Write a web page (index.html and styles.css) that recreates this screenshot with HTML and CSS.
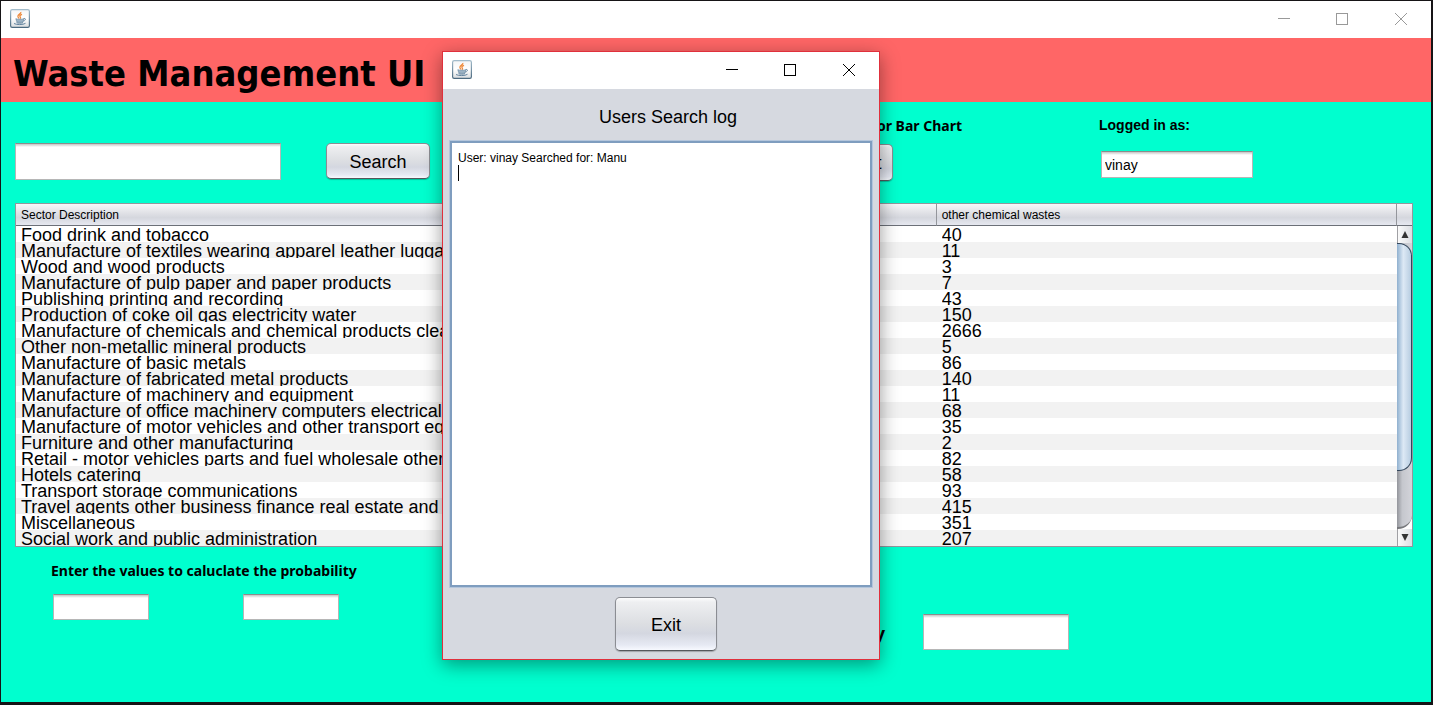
FILE: index.html
```
<!DOCTYPE html>
<html lang="en">
<head>
<meta charset="utf-8">
<title>Waste Management UI</title>
<link rel="stylesheet" href="styles.css">
</head>
<body>
<svg class="defs" aria-hidden="true">
  <defs>
    <linearGradient id="tile" x1="0" y1="0" x2="0" y2="1">
      <stop offset="0" stop-color="#f4f5f6"/><stop offset=".5" stop-color="#fff"/><stop offset="1" stop-color="#d9dcde"/>
    </linearGradient>
    <linearGradient id="rim" x1="0" y1="0" x2="0" y2="1">
      <stop offset="0" stop-color="#a3bccb"/><stop offset="1" stop-color="#4c6a80"/>
    </linearGradient>
    <symbol id="java" viewBox="0 0 20 19">
      <rect x=".6" y=".6" width="18.8" height="17.8" rx="1.6" fill="url(#tile)" stroke="url(#rim)" stroke-width="1.2"/>
      <path d="M10.8 3c.8 1.7-3.300 2.500-2.900 4.500.1.800.7 1.200 1.200 2M12 5.300C9.900 6.200 9.300 7 10.300 8.100c.5.600.1 1.100-.4 1.500" fill="none" stroke="#ee8a3c" stroke-width="1.300"/>
      <path d="M5.800 9.700c2.200.8 6 .8 8.200 0l-.9 3.100c-1.500.7-4.800.7-6.300 0z" fill="#9db3c4" stroke="#6f8da5" stroke-width=".7"/>
      <path d="M13.800 9.500c2.300-.5 2.300 1.900-.4 2.500" fill="none" stroke="#6f8da5" stroke-width="1"/>
      <path d="M4 14.500c2.500 1.500 9 1.500 11.500-.2M6.500 13.700c2 .6 4.500.6 6.500 0" fill="none" stroke="#6485a0" stroke-width="1"/>
    </symbol>
    <symbol id="min" viewBox="0 0 12 12"><path d="M0 5.500h12" stroke="currentColor"/></symbol>
    <symbol id="max" viewBox="0 0 12 12"><path d="M.5.500h11v11H.5z" fill="none" stroke="currentColor"/></symbol>
    <symbol id="close" viewBox="0 0 12 12"><path d="M0 0l12 12M12 0L0 12" stroke="currentColor"/></symbol>
  </defs>
</svg>

<main class="window">
  <div class="titlebar titlebar-inactive">
    <svg class="app-icon"><use href="#java"/></svg>
    <div class="controls">
      <button class="control" aria-label="Minimize"><svg><use href="#min"/></svg></button>
      <button class="control" aria-label="Maximize"><svg><use href="#max"/></svg></button>
      <button class="control" aria-label="Close"><svg><use href="#close"/></svg></button>
    </div>
  </div>
  <header class="banner"><h1>Waste Management UI</h1></header>

  <div class="content">
    <div class="toolbar">
      <form class="search">
        <input class="field field-search" type="text" aria-label="Search text">
        <button class="btn btn-search" type="button">Search</button>
      </form>
      <div class="chart">
        <label class="caption" for="chart">For Bar Chart</label>
        <button class="btn btn-chart" id="chart" type="button">Bar Chart</button>
      </div>
      <div class="login">
        <label class="caption caption-plain" for="user">Logged in as:</label>
        <input class="field field-user" id="user" type="text" value="vinay">
      </div>
    </div>

    <div class="scrollpane">
      <div class="viewport">
        <table class="grid">
          <thead><tr><th>Sector Description</th><th></th><th>other chemical wastes</th></tr></thead>
          <tbody>
            <tr><td><span>Food drink and tobacco</span></td><td></td><td><span>40</span></td></tr>
            <tr><td><span>Manufacture of textiles wearing apparel leather luggage</span></td><td></td><td><span>11</span></td></tr>
            <tr><td><span>Wood and wood products</span></td><td></td><td><span>3</span></td></tr>
            <tr><td><span>Manufacture of pulp paper and paper products</span></td><td></td><td><span>7</span></td></tr>
            <tr><td><span>Publishing printing and recording</span></td><td></td><td><span>43</span></td></tr>
            <tr><td><span>Production of coke oil gas electricity water</span></td><td></td><td><span>150</span></td></tr>
            <tr><td><span>Manufacture of chemicals and chemical products clea</span></td><td></td><td><span>2666</span></td></tr>
            <tr><td><span>Other non-metallic mineral products</span></td><td></td><td><span>5</span></td></tr>
            <tr><td><span>Manufacture of basic metals</span></td><td></td><td><span>86</span></td></tr>
            <tr><td><span>Manufacture of fabricated metal products</span></td><td></td><td><span>140</span></td></tr>
            <tr><td><span>Manufacture of machinery and equipment</span></td><td></td><td><span>11</span></td></tr>
            <tr><td><span>Manufacture of office machinery computers electrical</span></td><td></td><td><span>68</span></td></tr>
            <tr><td><span>Manufacture of motor vehicles and other transport eq</span></td><td></td><td><span>35</span></td></tr>
            <tr><td><span>Furniture and other manufacturing</span></td><td></td><td><span>2</span></td></tr>
            <tr><td><span>Retail - motor vehicles parts and fuel wholesale other</span></td><td></td><td><span>82</span></td></tr>
            <tr><td><span>Hotels catering</span></td><td></td><td><span>58</span></td></tr>
            <tr><td><span>Transport storage communications</span></td><td></td><td><span>93</span></td></tr>
            <tr><td><span>Travel agents other business finance real estate and</span></td><td></td><td><span>415</span></td></tr>
            <tr><td><span>Miscellaneous</span></td><td></td><td><span>351</span></td></tr>
            <tr><td><span>Social work and public administration</span></td><td></td><td><span>207</span></td></tr>
          </tbody>
        </table>
      </div>
      <div class="scrollbar">
        <div class="corner"></div>
        <button class="arrow" aria-label="Scroll up"><svg viewBox="0 0 8 7"><path d="M4 0l3.500 7h-7z"/></svg></button>
        <div class="track"><div class="thumb"></div></div>
        <button class="arrow" aria-label="Scroll down"><svg viewBox="0 0 8 7"><path d="M4 7L.5 0h7z"/></svg></button>
      </div>
    </div>

    <div class="bottom">
      <fieldset class="values">
        <legend class="caption">Enter the values to caluclate the probability</legend>
        <div class="pair">
          <input class="field field-small" type="text" aria-label="First value">
          <input class="field field-small" type="text" aria-label="Second value">
        </div>
      </fieldset>
      <div class="result">
        <label class="result-label" for="prob">Probability</label>
        <input class="field field-result" id="prob" type="text">
      </div>
    </div>
  </div>
</main>

<section class="dialog" role="dialog" aria-labelledby="log-title">
  <div class="titlebar">
    <svg class="app-icon"><use href="#java"/></svg>
    <div class="controls">
      <button class="control" aria-label="Minimize"><svg><use href="#min"/></svg></button>
      <button class="control" aria-label="Maximize"><svg><use href="#max"/></svg></button>
      <button class="control" aria-label="Close"><svg><use href="#close"/></svg></button>
    </div>
  </div>
  <div class="dialog-body">
    <label class="dialog-title" id="log-title" for="log">Users Search log</label>
    <div class="log">
      <textarea id="log">User: vinay Searched for: Manu
</textarea>
      <span class="caret"></span>
    </div>
    <button class="btn btn-exit" type="button">Exit</button>
  </div>
</section>
</body>
</html>
```
FILE: styles.css
```
* { box-sizing: border-box; }

body {
  margin: 0;
  min-height: 100vh;
  padding: 1px 2px 3px 1px;
  display: flex;
  background: #161416;
  color: #000;
  font: 18px "Liberation Sans", Arial, sans-serif;
}

button, input, textarea { font: inherit; color: inherit; margin: 0; }
.defs { position: absolute; width: 0; height: 0; }

.window {
  flex: 1;
  display: flex;
  flex-direction: column;
  background: #00ffcf;
}

/* Title bars */
.titlebar {
  display: flex;
  align-items: center;
  justify-content: space-between;
  height: 37px;
  padding: 0 0 2px 9px;
  background: #fff;
}
.app-icon { width: 20px; height: 19px; }
.controls { display: flex; }
.control {
  width: 58px;
  height: 35px;
  padding: 0;
  border: 0;
  background: none;
  display: grid;
  place-items: center;
}
.control:last-child { width: 60px; }
.control svg { width: 12px; height: 12px; shape-rendering: crispEdges; }
.titlebar-inactive .control { color: #999; }

.banner {
  height: 64px;
  padding: 0 12px;
  display: flex;
  align-items: center;
  background: #ff6666;
}
h1 {
  margin: 0;
  padding-top: 8px;
  font: bold 36px/44px "DejaVu Sans Condensed", Tahoma, sans-serif;
}

.content { padding: 0 18px 0 14px; }

/* Shared controls */
.caption { font: bold 14px/18px "Noto Sans", Tahoma, sans-serif; }
.caption-plain { font-family: "Liberation Sans", Arial, sans-serif; }

.field {
  border: 1px solid #b6b6b6;
  border-top: 1px solid #8c8c8c;
  border-radius: 0;
  background: linear-gradient(#c4c4c4, #ececec 2px, #fff 3px);
  padding: 0 3px;
  outline: 0;
}

.btn {
  padding: 2px 0 0;
  border: 1px solid #8b8d93;
  border-bottom-color: #55575c;
  border-radius: 5px;
  background: linear-gradient(#fcfcfd, #eeeff1 8%, #dcdee2 50%, #d4d7e0 68%, #e6e9f3 90%, #f7f9ff);
  box-shadow: 0 1px 1px rgba(0, 0, 0, .25);
}

/* Row above the table */
.toolbar {
  display: flex;
  height: 101px;
  padding-right: 160px;
}
.search { display: flex; gap: 45px; padding-top: 41px; }
.field-search { width: 266px; height: 37px; }
.btn-search { width: 104px; height: 36px; }
.chart {
  width: 167px;
  margin-left: auto;
  padding-top: 15px;
  display: flex;
  flex-direction: column;
  gap: 9px;
}
.chart .caption { text-align: right; }
.btn-chart { width: 98px; height: 37px; padding-right: 2px; }
.login {
  width: 154px;
  margin-left: 137px;
  padding-top: 14px;
  display: flex;
  flex-direction: column;
  align-items: flex-start;
  gap: 17px;
}
.field-user { width: 152px; height: 27px; margin-left: 2px; font-size: 14px; }

/* Table */
.scrollpane {
  display: flex;
  border: 1px solid #94969c;
  background: #fff;
}
.viewport { flex: 1; min-width: 0; }
.grid {
  width: 100%;
  table-layout: fixed;
  border-collapse: separate;
  border-spacing: 0;
}
.grid th {
  height: 22px;
  padding: 0 5px;
  border-right: 1px solid #94969c;
  border-bottom: 1px solid #6c7078;
  background: linear-gradient(#f8f8fa, #dfe0e5 45%, #d5d7de 65%, #e6e8f0);
  font-size: 12px;
  font-weight: normal;
  line-height: 16px;
  text-align: left;
}
.grid td { height: 16px; padding: 0 0 0 5px; }
.grid td span {
  display: block;
  height: 16px;
  overflow: hidden;
  line-height: 18px;
  white-space: nowrap;
}
.grid tbody tr:nth-child(even) { background: #f2f2f2; }

.scrollbar {
  width: 15px;
  display: flex;
  flex-direction: column;
}
.corner {
  height: 22px;
  border-bottom: 1px solid #6c7078;
  background: linear-gradient(#f8f8fa, #dfe0e5 45%, #d5d7de 65%, #e6e8f0);
}
.arrow {
  height: 17px;
  padding: 0;
  border: 0;
  border-left: 1px solid #a0a0a4;
  display: grid;
  place-items: center;
  background: linear-gradient(90deg, #fafafa, #dcdee3);
}
.arrow svg { width: 8px; height: 7px; fill: #333; }
.track {
  flex: 1;
  background: linear-gradient(90deg, #93959b, #c5c7cd 35%, #d3d4da);
  border-bottom: 2px solid #77787c;
  border-bottom-right-radius: 14px 14px;
}
.thumb {
  height: 228px;
  border: 1px solid #33475c;
  border-left: 0;
  border-radius: 0 13px 13px 0;
  background: linear-gradient(90deg, #8fb0cf, #dde9f5 45%, #b7cde1);
}

/* Row below the table */
.bottom {
  display: flex;
  justify-content: space-between;
  padding: 15px 344px 0 36px;
}
.values { margin: 0; padding: 0; border: 0; min-width: 0; }
.values legend { padding: 0; }
.pair { display: flex; gap: 94px; padding: 14px 0 0 2px; }
.field-small { width: 96px; height: 26px; }
.result { display: flex; align-items: center; gap: 38px; padding-top: 52px; }
.result-label { padding-top: 2px; font: bold 18px/22px "Noto Sans", Tahoma, sans-serif; }
.field-result { width: 146px; height: 36px; }

/* Floating log window */
.dialog {
  position: absolute;
  left: 442px;
  top: 51px;
  width: 438px;
  border: 1px solid #e0303c;
  background: #d6d9e0;
  box-shadow: 0 5px 18px rgba(0, 0, 0, .4);
}
.dialog-body {
  display: flex;
  flex-direction: column;
  align-items: center;
  padding: 17px 6px 8px;
}
.dialog-title { line-height: 22px; margin-left: 14px; }
.log {
  position: relative;
  width: 100%;
  height: 448px;
  margin: 12px 0 9px;
  padding: 1px;
  background: #b4c6dc;
}
.log textarea {
  display: block;
  width: 100%;
  height: 100%;
  padding: 7px 6px;
  border: 2px solid #7f9dbf;
  outline: 0;
  resize: none;
  background: #fff;
  font-size: 12px;
  line-height: 16px;
}
.caret {
  position: absolute;
  left: 9px;
  top: 25px;
  width: 1px;
  height: 16px;
  background: #000;
}
.btn-exit { width: 102px; height: 54px; margin-left: 10px; }
```
